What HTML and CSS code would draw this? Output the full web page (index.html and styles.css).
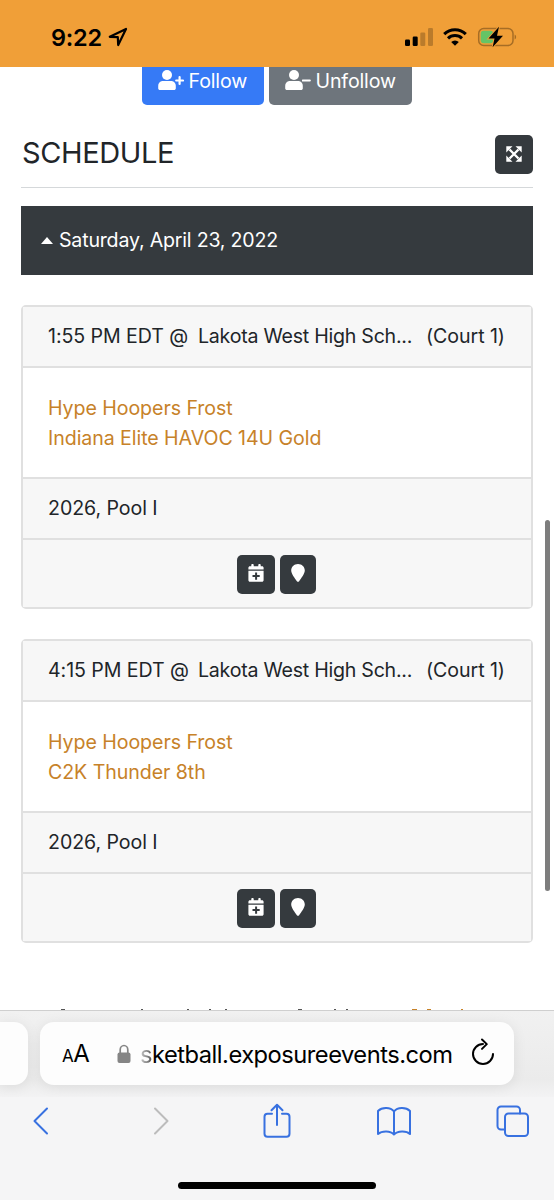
FILE: index.html
```html
<!DOCTYPE html>
<html lang="en">
<head>
<meta charset="utf-8">
<title>Schedule</title>
<link rel="stylesheet" href="styles.css">
</head>
<body>
<svg class="defs" aria-hidden="true">
  <symbol id="user" viewBox="0 0 18 20"><circle cx="9" cy="5" r="5"/><path d="M5 11h8c3 0 4.800 2.200 4.800 5v2.200c0 1-.8 1.800-1.800 1.800H2c-1 0-1.800-.8-1.800-1.800V16c0-2.800 1.800-5 4.800-5z"/></symbol>
  <symbol id="cal" viewBox="0 0 16 18"><path fill-rule="evenodd" d="M2 2.300h1.300V.9c0-.5.3-.9.8-.9h.8c.5 0 .8.4.8.9v1.400h4.600V.9c0-.5.3-.9.8-.9h.8c.5 0 .8.4.8.9v1.400H14c.9 0 1.600.7 1.600 1.500v1.600H.4V3.800c0-.8.700-1.500 1.600-1.500zM.4 6.700h15.200v9.600c0 .9-.7 1.500-1.600 1.500H2c-.9 0-1.600-.6-1.600-1.500zM7.100 8.400v2.600H4.500v2.100h2.600v2.600h2v-2.600h2.600V11H9.100V8.400z"/></symbol>
  <symbol id="pin" viewBox="0 0 14 18"><path d="M7 0c3.900 0 6.800 2.900 6.800 6.500 0 3.200-3.600 7.700-5.700 10.700-.6.800-1.600.8-2.200 0C3.800 14.200.2 9.700.2 6.500.2 2.900 3.100 0 7 0z"/></symbol>
</svg>
<header class="status">
  <span class="time">9:22</span>
  <svg class="loc" viewBox="0 0 20 20"><path d="M1.800 9.800 18 2 10.200 18 9.800 10.200z"/></svg>
  <svg class="signal" viewBox="0 0 28 18"><rect x="0" y="11.500" width="5" height="6.500" rx="1.200"/><rect x="7.700" y="8.500" width="5" height="9.500" rx="1.200"/><g opacity=".22"><rect x="15.300" y="4.500" width="5" height="13.500" rx="1.200"/><rect x="23" y="0" width="5" height="18" rx="1.200"/></g></svg>
  <svg class="wifi" viewBox="0 0 24 18"><path class="arc" d="M1.200 6.200a15.500 15.500 0 0 1 21.600 0M5 10.400a10 10 0 0 1 14 0"/><path d="M12 17.700 8.200 14a5.500 5.500 0 0 1 7.600 0z"/></svg>
  <svg class="battery" viewBox="0 0 40 22"><rect class="shell" x="1.700" y="2.500" width="34.300" height="17" rx="5"/><path class="tip" d="M37.600 8.500c2 .8 2 4.200 0 5z"/><rect class="charge" x="3.700" y="4.700" width="12.500" height="12.600" rx="3"/><path class="bolt" d="M22 .8 11.500 12.500h6L15.600 21.200 26 9.700h-6z"/></svg>
</header>
<main class="page">
  <div class="actions">
    <button class="follow"><svg class="user"><use href="#user"/></svg><svg class="sign" viewBox="0 0 9 20"><path d="M1.200 9.500h6.800M4.600 6.100v6.800"/></svg><span>Follow</span></button>
    <button class="unfollow"><svg class="user"><use href="#user"/></svg><svg class="sign" viewBox="0 0 9 20"><path d="M.8 9.500h7"/></svg><span>Unfollow</span></button>
  </div>
  <div class="heading">
    <h2>SCHEDULE</h2>
    <button class="expand"><svg viewBox="0 0 16 16"><path class="cross" d="M3.500 3.500l9 9M12.500 3.500l-9 9"/><path d="M.3.300h6.200L.3 6.500zM15.700.300v6.200L9.500.300zM.3 15.700V9.500l6.200 6.200zM15.700 15.700H9.500l6.200-6.200z"/></svg></button>
  </div>
  <div class="day"><span class="caret"></span><span class="date">Saturday, April 23, 2022</span></div>
  <section class="card">
    <div class="row head"><span class="when">1:55 PM EDT @</span><span class="place">Lakota West High Sch...</span><span class="court">(Court 1)</span></div>
    <div class="teams"><a>Hype Hoopers Frost</a><a>Indiana Elite HAVOC 14U Gold</a></div>
    <div class="row pool">2026, Pool I</div>
    <div class="tools"><button class="b-cal"><svg><use href="#cal"/></svg></button><button class="b-pin"><svg><use href="#pin"/></svg></button></div>
  </section>
  <section class="card">
    <div class="row head"><span class="when">4:15 PM EDT @</span><span class="place">Lakota West High Sch...</span><span class="court">(Court 1)</span></div>
    <div class="teams"><a>Hype Hoopers Frost</a><a>C2K Thunder 8th</a></div>
    <div class="row pool">2026, Pool I</div>
    <div class="tools"><button class="b-cal"><svg><use href="#cal"/></svg></button><button class="b-pin"><svg><use href="#pin"/></svg></button></div>
  </section>
  <svg class="peek" viewBox="0 0 554 2"><path d="M61 1.500h4M141 1.500h2M187 1.500h2M209 1.500h2M225 1.500h2M298 1.500h4M334 1.500h2M346 1.500h2"/><path class="gold" d="M412 1.500h5M427 1.500h4M461 1.500h2"/></svg>
  <div class="scroll"></div>
</main>
<footer class="browser">
  <div class="tabs">
    <div class="prev"></div>
    <div class="address">
      <span class="aa"><small>A</small>A</span>
      <svg class="lock" viewBox="0 0 14 20"><rect x=".5" y="8.500" width="13" height="10.500" rx="2"/><path d="M3.200 9V5.700a3.800 4.200 0 0 1 7.600 0V9"/></svg>
      <span class="url"><span class="fade">s</span>ketball.exposureevents.com</span>
      <svg class="reload" viewBox="0 0 24 28"><path d="M12 6A10 10 0 1 0 22 16M11 1.500l4.800 4.600-4.800 4.800"/></svg>
    </div>
  </div>
  <nav class="nav">
    <svg viewBox="0 0 36 36"><path d="M25 5.500 12.500 18 25 30.500"/></svg>
    <svg class="off" viewBox="0 0 36 36"><path d="M12 5.500 24.500 18 12 30.500"/></svg>
    <svg viewBox="0 0 36 36"><path d="M13 10.800H8.500a3 3 0 0 0-3 3v17a3 3 0 0 0 3 3h19a3 3 0 0 0 3-3v-17a3 3 0 0 0-3-3H23M18 22V2M12.500 7.200 18 1.700l5.500 5.500"/></svg>
    <svg viewBox="0 0 36 36"><path d="M18 8.500v23M18 8.500C14.500 4 6 4 2 8v23c4-3.500 12.500-3.500 16 .5 3.500-4 12.500-4 16-.5V8c-4-4-12.500-4-16 .5z"/></svg>
    <svg viewBox="0 0 36 36"><path d="M10 26.500H7a3.500 3.500 0 0 1-3.500-3.500V7A3.500 3.500 0 0 1 7 3.500h15.500A3.500 3.500 0 0 1 26 7v3.500"/><rect x="11" y="10.500" width="23" height="22.500" rx="3.500"/></svg>
  </nav>
  <div class="home"></div>
</footer>
</body>
</html>
```

FILE: styles.css
```css
* { box-sizing: border-box; }
body { margin: 0; width: 554px; height: 1200px; overflow: hidden; display: flex; flex-direction: column; background: #fff; font: 19.6px/30px Inter, "Liberation Sans", sans-serif; letter-spacing: -.07px; color: #212529; white-space: nowrap; }
button { border: 0; padding: 0; margin: 0; font: inherit; letter-spacing: inherit; color: #fff; display: flex; align-items: center; }
svg { display: block; flex: none; }
.defs { position: absolute; width: 0; height: 0; }

.status { flex: none; height: 67px; padding: 7px 37px 0 51px; background: #f09f38; display: flex; align-items: center; color: #000; }
.time { font-size: 23.500px; font-weight: 600; width: 57px; letter-spacing: -.2px; padding-top: 1px; }
.loc { width: 20px; height: 20px; }
.loc path { fill: none; stroke: #000; stroke-width: 2.200; stroke-linejoin: round; }
.signal { width: 28px; height: 18px; margin-left: auto; }
.wifi { width: 24px; height: 18px; margin: 0 10px; }
.arc { fill: none; stroke: #000; stroke-width: 3; }
.battery { width: 40px; height: 22px; }
.shell { fill: none; stroke: #a66d25; stroke-width: 1.500; }
.tip { fill: #a66d25; }
.charge { fill: #65c466; }
.bolt { fill: #000; stroke: #f09f38; stroke-width: 1.800; paint-order: stroke; }

.page { flex: none; position: relative; height: 943px; padding: 0 21px; overflow: hidden; }
.actions { display: flex; justify-content: center; gap: 5px; height: 38px; }
.actions button { height: 38px; padding: 0 0 11px 16px; border-radius: 0 0 5px 5px; }
.follow { width: 122px; background: #367af6; }
.unfollow { width: 143px; background: #6e757c; }
.actions span { letter-spacing: -.15px; }
.user { width: 18px; height: 20px; fill: #fff; margin-top: -1px; }
.sign { width: 9px; height: 20px; margin: 0 4.500px 0 -1px; }
.sign path { stroke: #fff; stroke-width: 2.200; fill: none; stroke-linecap: round; }
.heading { display: flex; align-items: flex-start; justify-content: space-between; height: 83px; padding-top: 30px; border-bottom: 1px solid #d5d8da; }
h2 { margin: 0; font-size: 29px; line-height: 35px; font-weight: 400; letter-spacing: -.4px; padding-left: 1px; }
.expand { width: 38px; height: 39px; justify-content: center; background: #353a3e; border-radius: 5px; }
.expand svg { width: 16px; height: 16px; fill: #fff; margin-bottom: 2px; }
.cross { stroke: #fff; stroke-width: 2.400; }
.day { margin: 18px 0 30px; height: 69px; padding: 0 0 1px 20px; display: flex; align-items: center; gap: 6px; background: #353a3e; color: #fff; }
.date { letter-spacing: -.2px; }
.caret { border: 6px solid transparent; border-top: 0; border-bottom: 7px solid #fff; }

.card { height: 304px; margin-bottom: 30px; border: 2px solid #e0e0e0; border-radius: 5px; display: grid; grid-template-rows: 61px 111px 61px 67px; }
.row { padding: 0 25px 1px; background: #f7f7f7; border-bottom: 2px solid #e0e0e0; display: flex; align-items: center; }
.when { width: 150px; }
.place { width: 228px; letter-spacing: -.25px; }
.teams { padding: 25px 25px 0; border-bottom: 2px solid #e0e0e0; }
.teams a { display: block; color: #c78229; }
.tools { background: #f7f7f7; display: flex; align-items: center; justify-content: center; gap: 5px; padding: 1px 1px 0 0; }
.tools button { height: 39px; justify-content: center; background: #353a3e; border-radius: 5px; }
.b-cal { width: 38px; }
.b-pin { width: 36px; }
.tools svg { width: 16px; height: 18px; fill: #fff; margin-bottom: 2px; }
.b-pin svg { width: 14px; }
.peek { position: absolute; left: 0; bottom: 0; width: 554px; height: 2px; stroke: #555; stroke-width: 1; }
.gold { stroke: #c78229; }
.scroll { position: absolute; left: 545px; top: 453px; width: 5px; height: 371px; border-radius: 3px; background: #7d7d7d; }

.browser { flex: none; height: 190px; border-top: 1px solid #cfcfcf; background: #f5f5f6; color: #000; }
.tabs { height: 86px; padding-top: 11px; display: flex; gap: 12px; overflow: hidden; background: linear-gradient(#f1f1f1, #ebebeb 80%, #f3f3f4); }
.prev { width: 28px; height: 63px; border-radius: 0 14px 14px 0; background: #fdfdfd; box-shadow: 0 2px 14px rgba(0,0,0,.08); }
.address { width: 474px; height: 63px; padding-left: 22px; display: flex; align-items: center; border-radius: 14px; background: #fdfdfd; box-shadow: 0 2px 14px rgba(0,0,0,.08); font-size: 24px; }
.aa { flex: none; width: 55px; font-size: 24px; padding-top: 3px; letter-spacing: -.4px; }
.aa small { font-size: 17px; }
.lock { width: 14px; height: 20px; fill: #858585; }
.lock path { fill: none; stroke: #858585; stroke-width: 1.700; }
.url { flex: none; width: 340px; padding: 2px 0 0 9px; font-size: 23.700px; letter-spacing: -.5px; }
.fade { background: linear-gradient(90deg, #ccc, #555); background-clip: text; -webkit-background-clip: text; color: transparent; }
.reload { width: 24px; height: 28px; margin-top: -3px; fill: none; stroke: #000; stroke-width: 2; stroke-linecap: round; stroke-linejoin: round; }
.nav { height: 48px; padding: 6px 25px 0 22px; display: flex; justify-content: space-between; }
.nav svg { position: relative; width: 36px; height: 36px; fill: none; stroke: #3871e0; stroke-width: 2; stroke-linecap: round; stroke-linejoin: round; }
.nav svg:nth-child(n+3) { left: 1px; }
.nav .off { left: 3px; stroke: #bcbcbc; }
.home { width: 198px; height: 7px; margin: 37px auto 0; border-radius: 4px; background: #000; }
```
